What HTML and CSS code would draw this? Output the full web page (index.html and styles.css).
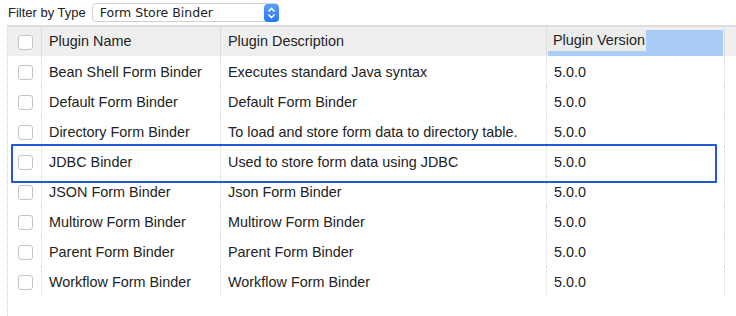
FILE: index.html
```html
<!DOCTYPE html>
<html>
<head>
<meta charset="utf-8">
<link rel="stylesheet" href="styles.css">
</head>
<body>
<div class="filter">
  <span class="label">Filter by Type</span>
  <div class="select">
    <span class="value">Form Store Binder</span>
    <span class="arrow"><svg width="9" height="12" viewBox="0 0 9 12"><path d="M1.5 4.5 L4.5 1.5 L7.5 4.5 M1.5 7.5 L4.5 10.5 L7.5 7.5" fill="none" stroke="#fff" stroke-width="1.6"/></svg></span>
  </div>
</div>
<div class="wrap">
<table class="grid">
  <thead>
    <tr>
      <th class="c-chk"><span class="cb"></span></th>
      <th class="c-name">Plugin Name</th>
      <th class="c-desc">Plugin Description</th>
      <th class="c-ver"><div class="drop"><span>Plugin Version</span></div></th>
      <th class="c-pad"></th>
    </tr>
  </thead>
  <tbody>
    <tr><td class="c-chk"><span class="cb"></span></td><td>Bean Shell Form Binder</td><td>Executes standard Java syntax</td><td>5.0.0</td><td class="c-pad"></td></tr>
    <tr><td class="c-chk"><span class="cb"></span></td><td>Default Form Binder</td><td>Default Form Binder</td><td>5.0.0</td><td class="c-pad"></td></tr>
    <tr><td class="c-chk"><span class="cb"></span></td><td>Directory Form Binder</td><td>To load and store form data to directory table.</td><td>5.0.0</td><td class="c-pad"></td></tr>
    <tr class="hl"><td class="c-chk"><span class="cb"></span></td><td>JDBC Binder</td><td>Used to store form data using JDBC</td><td>5.0.0</td><td class="c-pad"></td></tr>
    <tr><td class="c-chk"><span class="cb"></span></td><td>JSON Form Binder</td><td>Json Form Binder</td><td>5.0.0</td><td class="c-pad"></td></tr>
    <tr><td class="c-chk"><span class="cb"></span></td><td>Multirow Form Binder</td><td>Multirow Form Binder</td><td>5.0.0</td><td class="c-pad"></td></tr>
    <tr><td class="c-chk"><span class="cb"></span></td><td>Parent Form Binder</td><td>Parent Form Binder</td><td>5.0.0</td><td class="c-pad"></td></tr>
    <tr><td class="c-chk"><span class="cb"></span></td><td>Workflow Form Binder</td><td>Workflow Form Binder</td><td>5.0.0</td><td class="c-pad"></td></tr>
  </tbody>
</table>
<div class="highlight"></div>
</div>
</body>
</html>
```
FILE: styles.css
```css
html, body {
  margin: 0;
  padding: 0;
  background: #fff;
  font-family: "Liberation Sans", Arial, Helvetica, sans-serif;
  color: #222;
  overflow: hidden;
  width: 736px;
  height: 316px;
}
.filter {
  display: flex;
  align-items: center;
  height: 25px;
  padding-left: 8px;
  font-size: 13px;
}
.label {
  margin-right: 6px;
  color: #222;
}
.select {
  position: relative;
  width: 187px;
  height: 19px;
  box-sizing: border-box;
  border: 1px solid #cfcfcf;
  border-radius: 4px;
  display: flex;
  align-items: center;
  padding-left: 7px;
  font-family: "DejaVu Sans", "Liberation Sans", sans-serif;
  font-size: 12.5px;
  background: #fff;
}
.select .value { flex: 1; }
.arrow {
  width: 15px;
  height: 18px;
  margin-right: -1px;
  background: linear-gradient(#5aa0ff, #2a74f5);
  border-radius: 4px;
  display: flex;
  align-items: center;
  justify-content: center;
}
.wrap {
  position: relative;
  margin-left: 7px;
  border-left: 1px dotted #ccc;
  height: 291px;
}
.grid {
  border-collapse: collapse;
  table-layout: fixed;
  width: 740px;
  font-size: 14.4px;
}
.grid th {
  background: #efefef;
  font-weight: normal;
  text-align: left;
  height: 27px;
  padding: 0 0 2px 7px;
  border-top: 2px solid #dedede;
  border-right: 1px solid #dcdcdc;
  color: #222;
}
.grid td {
  height: 29px;
  padding: 1px 0 0 7px;
  border-right: 1px dotted #d8d8d8;
  white-space: nowrap;
  vertical-align: middle;
}
.grid td.c-pad { border-right: none; }
.grid thead th.c-chk { width: 23px; }
.grid th.c-chk, .grid td.c-chk { padding-left: 10px; }
.grid thead th:nth-child(2) { width: 171px; }
.grid thead th:nth-child(3) { width: 318px; }
.grid thead th:nth-child(4) { width: 177px; padding: 0; vertical-align: bottom; }
.grid thead th.c-pad { width: 20px; border-right: none; }
.cb {
  display: block;
  width: 13px;
  height: 13px;
  border: 1px solid #c4c4c4;
  border-radius: 3px;
  background: #fff;
  margin-top: 2px;
}
.grid thead .cb { margin-top: 4px; }
.drop {
  height: 26px;
  margin-left: 1px;
  margin-right: 1px;
  background: #a9cdf4;
}
.drop span {
  display: inline-block;
  background: #ececec;
  padding: 0 1px 0 5px;
  height: 21px;
  line-height: 20px;
}
.highlight {
  position: absolute;
  left: 3px;
  top: 119px;
  width: 702px;
  height: 35px;
  border: 2px solid #2457d6;
  border-radius: 1px;
  pointer-events: none;
}
```
